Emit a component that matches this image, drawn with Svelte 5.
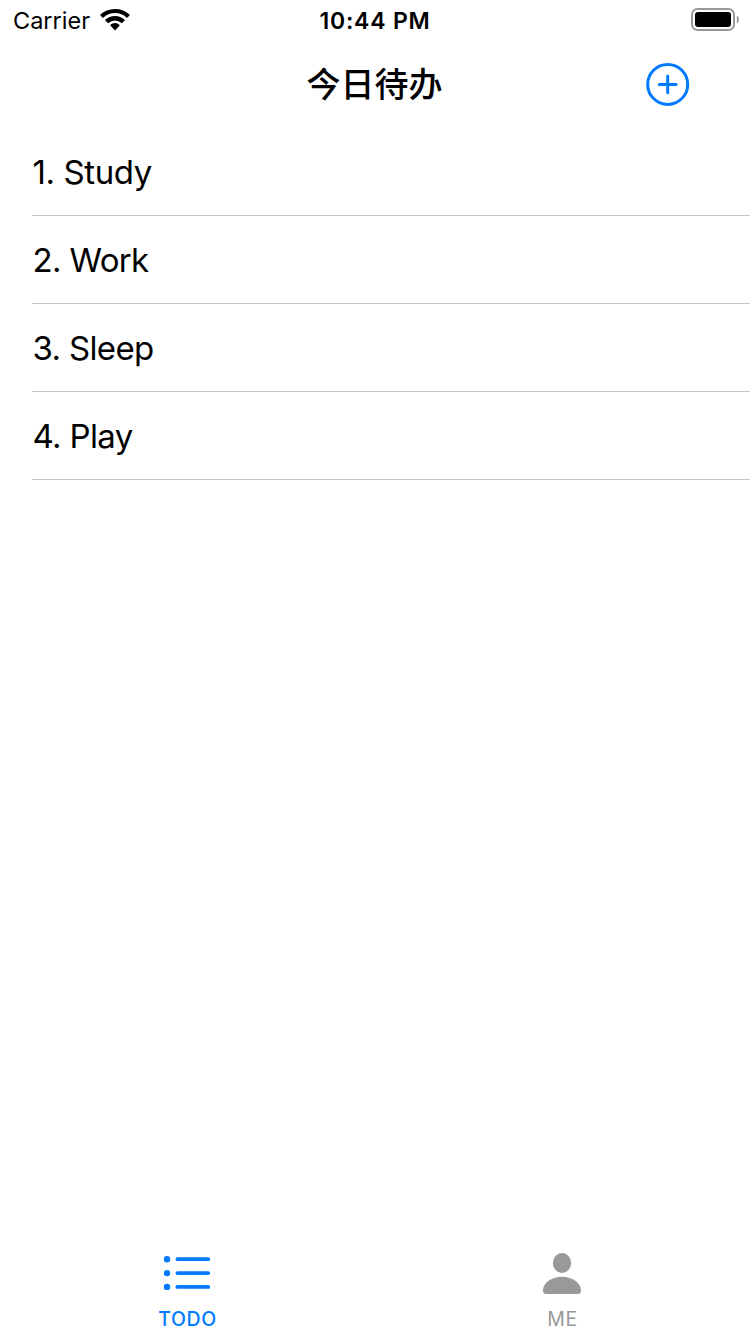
<script>
  const todos = ['Study', 'Work', 'Sleep', 'Play'];
</script>

<div class="screen">
  <header class="status">
    <div class="carrier">
      <span>Carrier</span>
      <svg width="30" height="22" viewBox="0 0 30 22">
        <path d="M15 0C9.2 0 4 2.2 0.3 5.7Q0 6 0.3 6.3L2.7 8.7Q3 9 3.3 8.7A17.1 17.1 0 0 1 26.7 8.7Q27 9 27.3 8.7L29.7 6.3Q30 6 29.7 5.7A21.5 21.5 0 0 0 15 0Z" />
        <path d="M15 7C11.2 7 7.8 8.5 5.3 10.8Q5 11.1 5.3 11.4L7.9 14Q8.2 14.3 8.5 14A9.7 9.7 0 0 1 21.5 14Q21.8 14.3 22.1 14L24.7 11.4Q25 11.1 24.7 10.8A14.2 14.2 0 0 0 15 7Z" />
        <path d="M15 14.1C13.3 14.1 11.7 14.8 10.4 15.9Q10.1 16.2 10.4 16.5L14.7 21.2Q15 21.5 15.3 21.2L19.6 16.5Q19.9 16.2 19.6 15.9A7 7 0 0 0 15 14.1Z" />
      </svg>
    </div>
    <time>10:44 PM</time>
    <svg class="battery" width="48" height="23" viewBox="0 0 48 23">
      <rect x="1" y="1" width="42" height="21" rx="5.5" fill="none" stroke="#999" stroke-width="2" />
      <rect x="4" y="4" width="36" height="15" rx="3" />
      <path d="M45.8 7.5Q48 8.5 48 11.5T45.8 15.5Z" fill="#999" />
    </svg>
  </header>
  <nav class="navbar">
    <h1>今日待办</h1>
    <button aria-label="Add">
      <svg width="44" height="44" viewBox="0 0 44 44" fill="none" stroke="#007aff" stroke-width="3" stroke-linecap="round">
        <circle cx="21.7" cy="22.4" r="20" />
        <path d="M13.3 22.4H30.1M21.7 14V30.8" />
      </svg>
    </button>
  </nav>
  <main>
    {#each todos as todo, i}
      <div class="row"><span>{i + 1}. {todo}</span></div>
    {/each}
  </main>
  <footer>
    <div class="tab active">
      <svg width="49" height="44" viewBox="0 0 49 44" fill="none" stroke="currentColor" stroke-linecap="round">
        <path d="M14.4 8.2H45.3M14.4 22.1H45.3M14.4 35.9H45.3" stroke-width="3.8" />
        <path d="M4 8.2H4.01M4 22.1H4.01M4 35.9H4.01" stroke-width="6.4" />
      </svg>
      <span>TODO</span>
    </div>
    <div class="tab">
      <svg width="41" height="44" viewBox="0 0 41 44" fill="currentColor">
        <ellipse cx="20" cy="12" rx="9.2" ry="10" />
        <path d="M4.5 43Q1 43 1 39.5C1 32.5 9 25.8 20 25.8S39 32.5 39 39.5Q39 43 35.5 43Z" />
      </svg>
      <span>ME</span>
    </div>
  </footer>
</div>

<style>
  :global(body) { margin: 0; background: #fff; }
  .screen { width: 750px; height: 1334px; display: flex; flex-direction: column; overflow: hidden; color: #000; font-family: Inter, "Noto Sans CJK SC", sans-serif; }
  svg { display: block; flex: none; }
  .status { height: 40px; display: grid; grid-template-columns: 1fr auto 1fr; align-items: center; box-sizing: border-box; padding: 0 11px; font-size: 23.5px; }
  .carrier { display: flex; align-items: center; gap: 10px; padding-left: 2px; }
  .carrier span, time { line-height: 38px; padding-top: 2px; }
  .battery { justify-self: end; margin-bottom: 1px; }
  time { font-weight: 600; font-size: 23px; letter-spacing: 0.8px; }
  .navbar { height: 88px; display: grid; grid-template-columns: 1fr auto 1fr; align-items: center; }
  h1 { grid-column: 2; margin: 0 1px 2px 0; font: 500 34px/50px "Noto Sans CJK SC", sans-serif; }
  button { justify-self: end; margin: 0 60px 0 0; padding: 0; border: 0; background: none; }
  .row { height: 88px; display: flex; align-items: center; box-sizing: border-box; margin-left: 32px; border-bottom: 1px solid #c6c6c8; font-size: 33px; letter-spacing: -0.65px; }
  .row span { padding: 1px 0 0 0.5px; }
  .row:first-child { letter-spacing: -0.4px; }
  footer { margin-top: auto; height: 83px; display: flex; }
  .tab { flex: 1; display: flex; flex-direction: column; align-items: center; gap: 9px; color: #999; font-size: 19.5px; font-weight: 400; letter-spacing: 0.6px; }
  .tab span { line-height: 30px; }
  .active { color: #007aff; font-weight: 500; }
</style>
